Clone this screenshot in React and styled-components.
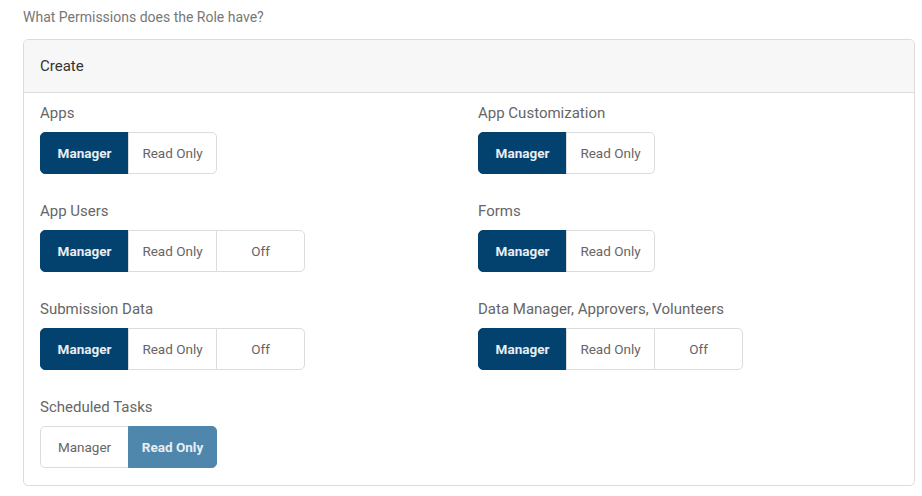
import React from "react";
import styled, { createGlobalStyle } from "styled-components";

const Global = createGlobalStyle`
  body { margin: 0; background: #fff; font-family: Roboto, "Noto Sans", sans-serif; }
`;
const Page = styled.div`padding: 7px 7px 8px 23px;`;
const Question = styled.div`font-size: 14px; color: #777; line-height: 20px; margin-bottom: 12px;`;
const Card = styled.div`border: 1px solid #dcdcdc; border-radius: 5px; overflow: hidden;`;
const Header = styled.div`
  background: #f7f7f7; border-bottom: 1px solid #dcdcdc; height: 52px;
  display: flex; align-items: center; padding-left: 16px; font-size: 15px; color: #333;
`;
const Body = styled.div`
  display: grid; grid-template-columns: 438px 1fr; row-gap: 27px;
  padding: 10px 16px 17px;
`;
const Field = styled.div`display: flex; flex-direction: column; gap: 9px;`;
const Label = styled.div`font-size: 15px; color: #666; line-height: 20px;`;
const Group = styled.div`display: flex;`;
const Btn = styled.div`
  width: 89px; height: 42px; box-sizing: border-box;
  display: flex; align-items: center; justify-content: center;
  font-size: 13.5px; font-weight: ${p => (p.$on ? 700 : 400)};
  color: ${p => (p.$on ? "#e8eef4" : "#666")};
  background: ${p => (p.$on ? (p.$light ? "#4e87ab" : "#03426f") : "#fff")};
  border: 1px solid ${p => (p.$on ? (p.$light ? "#4e87ab" : "#03426f") : "#dcdcdc")};
  margin-left: -1px;
  &:first-child { margin-left: 0; border-radius: 5px 0 0 5px; }
  &:last-child { border-radius: 0 5px 5px 0; }
`;

const fields = [
  ["Apps", ["Manager", "Read Only"], 0],
  ["App Customization", ["Manager", "Read Only"], 0],
  ["App Users", ["Manager", "Read Only", "Off"], 0],
  ["Forms", ["Manager", "Read Only"], 0],
  ["Submission Data", ["Manager", "Read Only", "Off"], 0],
  ["Data Manager, Approvers, Volunteers", ["Manager", "Read Only", "Off"], 0],
  ["Scheduled Tasks", ["Manager", "Read Only"], 1],
];

export default function App() {
  return (
    <Page>
      <Global />
      <Question>What Permissions does the Role have?</Question>
      <Card>
        <Header>Create</Header>
        <Body>
          {fields.map(([label, opts, sel]) => (
            <Field key={label}>
              <Label>{label}</Label>
              <Group>
                {opts.map((o, i) => (
                  <Btn key={o} $on={i === sel} $light={sel === 1}>{o}</Btn>
                ))}
              </Group>
            </Field>
          ))}
        </Body>
      </Card>
    </Page>
  );
}
